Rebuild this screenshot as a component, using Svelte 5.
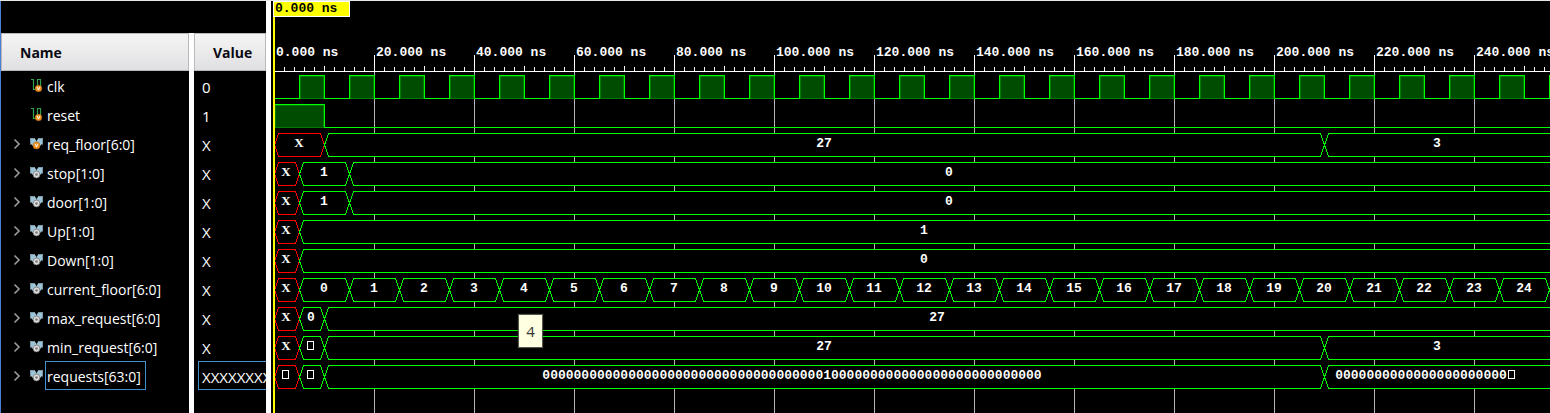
<script>
  const PX_PER_NS = 5;
  const ORIGIN = 1;
  const RULER = 71;
  const ROW = 29;

  let width = $state(1277);
  let height = $state(412);

  const at = (t) => ORIGIN + t * PX_PER_NS;

  const floors = Array.from({ length: 25 }, (_, n) => ({ t: 5 + n * 10, v: String(n) }));
  const oneHot = '0'.repeat(36) + '1' + '0'.repeat(27);

  const signals = [
    { name: 'clk', value: '0', kind: 'clock' },
    { name: 'reset', value: '1', kind: 'pulse' },
    { name: 'req_floor[6:0]', value: 'X', input: true, kind: 'bus', segs: [{ t: 0, v: 'X' }, { t: 10, v: '27' }, { t: 210, v: '3' }] },
    { name: 'stop[1:0]', value: 'X', kind: 'bus', segs: [{ t: 0, v: 'X' }, { t: 5, v: '1' }, { t: 15, v: '0' }] },
    { name: 'door[1:0]', value: 'X', kind: 'bus', segs: [{ t: 0, v: 'X' }, { t: 5, v: '1' }, { t: 15, v: '0' }] },
    { name: 'Up[1:0]', value: 'X', kind: 'bus', segs: [{ t: 0, v: 'X' }, { t: 5, v: '1' }] },
    { name: 'Down[1:0]', value: 'X', kind: 'bus', segs: [{ t: 0, v: 'X' }, { t: 5, v: '0' }] },
    { name: 'current_floor[6:0]', value: 'X', kind: 'bus', segs: [{ t: 0, v: 'X' }, ...floors, { t: 255, v: '' }] },
    { name: 'max_request[6:0]', value: 'X', kind: 'bus', segs: [{ t: 0, v: 'X' }, { t: 5, v: '0' }, { t: 10, v: '27' }] },
    { name: 'min_request[6:0]', value: 'X', kind: 'bus', segs: [{ t: 0, v: 'X' }, { t: 5, box: true }, { t: 10, v: '27' }, { t: 210, v: '3' }] },
    {
      name: 'requests[63:0]', value: 'XXXXXXXX', selected: true, kind: 'bus',
      segs: [{ t: 0, box: true, unknown: true }, { t: 5, box: true }, { t: 10, v: oneHot, shift: -32 }, { t: 210, v: '0'.repeat(22), shift: -16, more: true }]
    }
  ];

  const span = $derived(Math.ceil((width - ORIGIN) / PX_PER_NS));
  const ticks = $derived(Array.from({ length: Math.floor(span / 2) + 1 }, (_, i) => i * 2));
  const majors = $derived(ticks.filter((t) => t % 20 === 0));
  const cycles = $derived(Array.from({ length: Math.floor(span / 10) + 1 }, (_, i) => i * 10));

  const clockPath = $derived(
    'M1 27' + cycles.map((t) => `H${at(t + 5)}V4H${at(t + 10)}V27`).join('')
  );

  function layout(segs, w) {
    return segs.map((s, i) => {
      const x0 = at(s.t);
      const last = i === segs.length - 1;
      const x1 = last ? w : at(segs[i + 1].t);
      const d = last
        ? `M${w + 9} 4H${x0 + 4}L${x0} 15.5L${x0 + 4} 27H${w + 9}`
        : `M${x0} 15.5L${x0 + 4} 4H${x1 - 4}L${x1} 15.5L${x1 - 4} 27H${x0 + 4}Z`;
      return { ...s, d, red: s.v === 'X' || s.unknown, mid: Math.floor((x0 + x1) / 2) + (s.shift ?? 0) };
    });
  }
</script>

<main class="viewer">
  <section class="names">
    <table>
      <colgroup><col class="c-name" /><col class="c-gap" /><col /></colgroup>
      <thead>
        <tr><th scope="col">Name</th><td></td><th scope="col">Value</th></tr>
      </thead>
      <tbody>
        {#each signals as s (s.name)}
          <tr>
            <td>
              <div class="cell">
                {#if s.kind === 'bus'}
                  <button class="expand" aria-label="Expand {s.name}">
                    <svg width="8" height="12" viewBox="0 0 8 12"><path d="M1.5 1.500L6 6L1.5 10.500" fill="none" stroke="#9a9a9a" stroke-width="1.6" /></svg>
                  </button>
                  <svg class="icon" width="14" height="15" viewBox="0 0 14 15">
                    <path d="M0 2H4.500L6.500 5V8L3.500 9.500H2V8.500H0Z" fill="#9cc3d6" />
                    <path d="M13 2H8.500L6.500 5V8L9.500 9.500H11V8.500H13Z" fill="#9cc3d6" />
                    <path d="M.5 8V2.500H4.300M8.700 2.500H12.500V8" fill="none" stroke="#7b97a5" />
                    {#if s.input}
                      <circle cx="6.5" cy="9.5" r="3.500" fill="#f0911f" stroke="#b56a14" stroke-width=".6" />
                      <path d="M5 7.800L6.500 11L8 7.800" fill="none" stroke="#fff" />
                    {:else}
                      <circle cx="6.5" cy="9.5" r="3.400" fill="#dcdcdc" stroke="#777" stroke-width=".8" />
                      <circle cx="6.5" cy="9.5" r="1.300" fill="#777" />
                    {/if}
                  </svg>
                {:else}
                  <span class="expand"></span>
                  <svg class="icon" width="14" height="15" viewBox="0 0 14 15">
                    <path d="M1 1.5H3.500V11.500H7.500V1.5H10.500V9" fill="none" stroke="#35a04c" stroke-width="1.2" />
                    <circle cx="8.500" cy="10.500" r="3.300" fill="#f0911f" stroke="#b56a14" stroke-width=".5" />
                    <path d="M7 8.800L8.500 12L10 8.800" fill="none" stroke="#fff" />
                  </svg>
                {/if}
                <span class="label" class:selected={s.selected}>{s.name}</span>
              </div>
            </td>
            <td></td>
            <td><div class="value" class:selected={s.selected}>{s.value}</div></td>
          </tr>
        {/each}
      </tbody>
    </table>
  </section>

  <section class="waves" bind:clientWidth={width} bind:clientHeight={height}>
    <svg class="plot" role="img" aria-label="Waveforms">
      <g shape-rendering="crispEdges">
        {#each majors.slice(1) as t}
          <rect x={at(t)} y={RULER} width="1" height={Math.max(0, height - RULER)} fill="#b4b4b4" />
          <rect x={at(t)} y="54" width="1" height="17" fill="#fff" />
        {/each}
        {#each ticks.slice(1) as t}
          <rect x={at(t)} y={t % 10 ? 66 : 65} width="1" height={t % 10 ? 4 : 5} fill="#fff" />
        {/each}
        <rect x="2" y="70" width="100%" height="1" fill="#fff" />
      </g>
      {#each majors as t}
        <text class="mono" x={at(t) + 2} y="55">{t}.000 ns</text>
      {/each}

      {#each signals as s, i (s.name)}
        <g transform="translate(0 {RULER + i * ROW})">
          {#if s.kind === 'clock'}
            <g shape-rendering="crispEdges">
              {#each cycles as t}
                <rect x={at(t + 5) + 1} y="4" width="24" height="23" fill="#007d00" />
                <rect x={at(t + 5) + 2} y="5" width="22" height="21" fill="#004c00" />
              {/each}
              <path class="line" transform="translate(.5 -.5)" d={clockPath} />
            </g>
          {:else if s.kind === 'pulse'}
            <g shape-rendering="crispEdges">
              <rect x="2" y="4" width="49" height="23" fill="#007d00" />
              <rect x="3" y="5" width="47" height="21" fill="#004c00" />
              <path class="line" transform="translate(.5 -.5)" d="M1 4H{at(10)}V27H{width}" />
            </g>
          {:else}
            {#each layout(s.segs, width) as g}
              <path class="line bus" class:red={g.red} transform="translate(.5 -.5)" shape-rendering="crispEdges" d={g.d} />
              {#if g.box}
                <rect x={g.mid - 3.5} y="8.5" width="6" height="8" fill="none" stroke="#fff" />
              {:else if g.v}
                <text class="mono mid" class:unknown={g.red} x={g.mid} y="17">{g.v}</text>
              {/if}
              {#if g.more}
                <rect x={g.mid + 87.5} y="8.5" width="6" height="8" fill="none" stroke="#fff" />
              {/if}
            {/each}
          {/if}
        </g>
      {/each}
      <rect width="2" height="100%" fill="#ff0" />
    </svg>
    <div class="cursor">0.000 ns</div>
    <div class="tip" role="tooltip">4</div>
  </section>
</main>

<style>
  :global(body) {
    margin: 0;
    background: #000;
  }
  .viewer {
    display: flex;
    box-sizing: border-box;
    min-height: 100vh;
    border-top: 1px solid #e8e8e8;
    background: #000;
    color: #fff;
    font: 14px/20px "Open Sans", "Noto Sans", sans-serif;
  }
  .names {
    flex: none;
    width: 265px;
    padding-top: 32px;
    border-left: 1px solid #4a7fd4;
    border-right: 5px solid #fff;
    background: linear-gradient(#fff, #fff) 188px 32px / 5px 100% no-repeat;
  }
  table {
    width: 100%;
    table-layout: fixed;
    border-collapse: separate;
    border-spacing: 0;
  }
  .c-name {
    width: 188px;
  }
  .c-gap {
    width: 5px;
  }
  th,
  td {
    padding: 0;
  }
  th {
    box-sizing: border-box;
    height: 38px;
    padding-top: 2px;
    padding-left: 18px;
    border: 1px solid #b9b9bb;
    background: linear-gradient(#f5f5f5, #e0e0e3);
    color: #0a0a14;
    text-align: left;
  }
  tbody td {
    height: 29px;
    overflow: hidden;
  }
  .cell {
    display: flex;
    align-items: center;
    height: 29px;
    padding-left: 8px;
  }
  .expand {
    display: grid;
    place-items: center;
    flex: none;
    width: 16px;
    height: 17px;
    margin-right: 5px;
    padding: 0;
    border: 0;
    background: none;
  }
  .icon {
    flex: none;
  }
  .label,
  .value {
    box-sizing: border-box;
    height: 29px;
    padding-top: 5px;
    border: 1px solid transparent;
    white-space: nowrap;
  }
  .label {
    margin-left: 1px;
    padding-left: 1px;
    padding-right: 4px;
  }
  .value {
    width: 100px;
    margin-left: 4px;
    padding-left: 3px;
    font-size: 15px;
  }
  .label.selected,
  .value.selected {
    border-color: #3f92d2;
  }
  .waves {
    position: relative;
    flex: 1;
    min-width: 0;
    min-height: 412px;
    margin-left: 2px;
    overflow: hidden;
  }
  .plot {
    position: absolute;
    inset: 0;
    width: 100%;
    height: 100%;
  }
  .line {
    fill: none;
    stroke: #0f0;
  }
  .bus {
    fill: #000;
  }
  .red {
    stroke: #f00;
  }
  .mono,
  .cursor {
    font: bold 13px/14px "Liberation Mono", monospace;
    fill: #fff;
  }
  .mid {
    text-anchor: middle;
  }
  .unknown {
    font-family: "Liberation Serif", serif;
  }
  .cursor {
    position: absolute;
    top: 0;
    left: 0;
    box-sizing: border-box;
    width: 77px;
    padding-left: 1px;
    border: 1px solid #fff;
    background: #ff0;
    color: #000;
  }
  .tip {
    position: absolute;
    top: 313px;
    left: 245px;
    box-sizing: border-box;
    width: 25px;
    height: 34px;
    border: 1px solid #55554c;
    background: #ffffe1;
    box-shadow: 0 0 1px #444;
    color: #333;
    font-size: 15px;
    line-height: 33px;
    text-align: center;
  }
</style>
